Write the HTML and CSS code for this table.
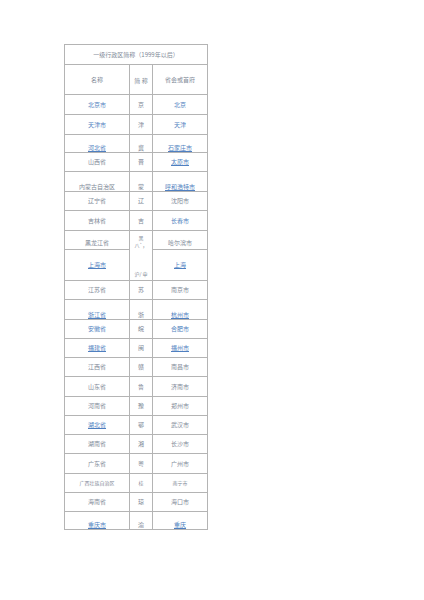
FILE: index.html
```html
<!DOCTYPE html>
<html lang="zh">
<head>
<meta charset="utf-8">
<title>一级行政区简称</title>
<link rel="stylesheet" href="styles.css">
</head>
<body>
<table class="t">
  <colgroup><col class="c1"><col class="c2"><col class="c3"></colgroup>
  <tr class="h20"><td colspan="3" class="g">一级行政区简称（1999年以后）</td></tr>
  <tr class="h30"><td class="g">名称</td><td class="g"><span class="lo">简&nbsp;称</span></td><td class="g">省会或首府</td></tr>
  <tr class="h20"><td><a>北京市</a></td><td class="g">京</td><td><a>北京</a></td></tr>
  <tr class="h20"><td><a>天津市</a></td><td class="g">津</td><td><a>天津</a></td></tr>
  <tr class="h18 b"><td><a class="u">河北省</a></td><td class="g">冀</td><td><a class="u">石家庄市</a></td></tr>
  <tr class="h19"><td class="g">山西省</td><td class="g">晋</td><td><a class="u">太原市</a></td></tr>
  <tr class="h20 b"><td class="g">内蒙古自治区</td><td class="g">蒙</td><td><a class="u">呼和浩特市</a></td></tr>
  <tr class="h19"><td class="g">辽宁省</td><td class="g">辽</td><td class="g">沈阳市</td></tr>
  <tr class="h20"><td class="g">吉林省</td><td class="g">吉</td><td><a>长春市</a></td></tr>
  <tr class="h19 b"><td class="g"><span class="pb">黑龙江省</span></td><td class="g sp" rowspan="2"><div class="stack"><span>黑</span><span>八`，</span><span class="last">沪/&nbsp;申</span></div></td><td class="g"><span class="pb">哈尔滨市</span></td></tr>
  <tr class="h31"><td><a class="u">上海市</a></td><td><a class="u">上海</a></td></tr>
  <tr class="h19"><td class="g">江苏省</td><td class="g">苏</td><td class="g">南京市</td></tr>
  <tr class="h20 b"><td><a class="u">浙江省</a></td><td class="g">浙</td><td><a class="u">杭州市</a></td></tr>
  <tr class="h19"><td><a>安徽省</a></td><td class="g">皖</td><td><a>合肥市</a></td></tr>
  <tr class="h19"><td><a class="u">福建省</a></td><td class="g">闽</td><td><a class="u">福州市</a></td></tr>
  <tr class="h19"><td class="g">江西省</td><td class="g">赣</td><td class="g">南昌市</td></tr>
  <tr class="h20"><td class="g">山东省</td><td class="g">鲁</td><td class="g">济南市</td></tr>
  <tr class="h19"><td class="g">河南省</td><td class="g">豫</td><td class="g">郑州市</td></tr>
  <tr class="h19"><td><a class="u">湖北省</a></td><td class="g">鄂</td><td class="g">武汉市</td></tr>
  <tr class="h19"><td class="g">湖南省</td><td class="g">湘</td><td class="g">长沙市</td></tr>
  <tr class="h20"><td class="g">广东省</td><td class="g">粤</td><td class="g">广州市</td></tr>
  <tr class="h19 sm"><td class="g">广西壮族自治区</td><td class="g">桂</td><td class="g">南宁市</td></tr>
  <tr class="h19"><td class="g">海南省</td><td class="g">琼</td><td class="g">海口市</td></tr>
  <tr class="h18 b"><td><a class="u">重庆市</a></td><td class="g">渝</td><td><a class="u">重庆</a></td></tr>
</table>
</body>
</html>
```
FILE: styles.css
```css
html, body {
  margin: 0;
  padding: 0;
  background: #ffffff;
}
body {
  padding: 44px 0 0 64px;
  font-family: "Noto Sans CJK SC", "Noto Sans", sans-serif;
  font-size: 6px;
  line-height: 8px;
}
.t {
  border-collapse: collapse;
  table-layout: fixed;
  width: 143px;
  border: 1px solid #a8a8a8;
}
.c1 { width: 65px; }
.c2 { width: 23px; }
.c3 { width: 55px; }
.t td {
  border: 1px solid #b4b4b4;
  padding: 0;
  text-align: center;
  vertical-align: middle;
  white-space: nowrap;
  overflow: visible;
  color: #4f7fc0;
}
.t td.g { color: #7f8a98; }
.t a { color: #4f7fc0; text-decoration: none; }
.t a.u { text-decoration: underline; }
.h18 td { height: 17px; }
.h19 td { height: 18px; }
.h20 td { height: 19px; }
.h30 td { height: 29px; }
.h31 td { height: 30px; }
.sm td { font-size: 5px; }
.lo { display: inline-block; padding-top: 3px; }
.pb { display: inline-block; padding-bottom: 2px; }
.b td { vertical-align: bottom; }
.b td.sp { vertical-align: top; }
.stack {
  display: flex;
  flex-direction: column;
  align-items: center;
  height: 49px;
  padding-top: 3px;
  box-sizing: border-box;
  font-size: 5px;
  line-height: 7px;
}
.stack .last {
  margin-top: auto;
  padding-bottom: 3px;
}
```
